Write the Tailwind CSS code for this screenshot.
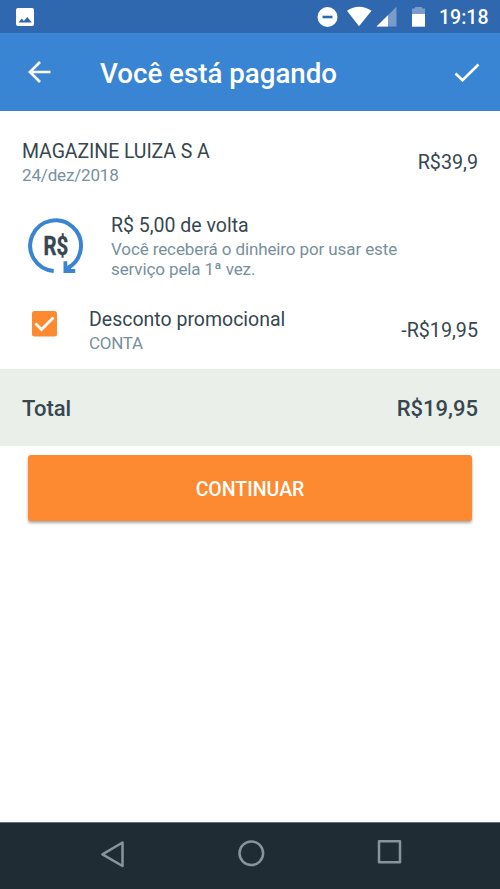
<!DOCTYPE html>
<html lang="pt-BR">
<head>
<meta charset="utf-8">
<title>Você está pagando</title>
<script src="https://cdn.jsdelivr.net/npm/@tailwindcss/browser@4"></script>
</head>
<body class="bg-white">
<div class="w-[500px] h-[889px] flex flex-col overflow-hidden font-[Roboto,sans-serif] text-[#37474f] whitespace-nowrap">
  <div class="h-[33px] shrink-0 bg-[#3068b0] flex items-center pl-4 pr-[11px] text-white">
    <svg class="w-[18px] h-[18px] mt-[1px]" viewBox="0 0 18 18"><rect width="18" height="18" rx="2" fill="#fff"/><path d="M2.500 14.500 5.800 10.500l2 2.500 3.500-4L15.800 14.500z" fill="#3068b0"/></svg>
    <svg class="ml-auto w-[122px] h-[33px]" viewBox="0 0 122 33">
      <circle cx="10.500" cy="17" r="10" fill="#fff"/><path d="M5.500 15.700h10v2.600h-10z" fill="#3068b0"/>
      <path d="M30 10.800Q42 2.800 54.500 10.800L42 26.200z" fill="#fff"/>
      <path d="M79.500 6.800V26.500H59.500z" fill="#fff" opacity=".35"/><path d="M71 15.200V26.500H59.500z" fill="#fff"/>
      <path d="M95 8.500h3V7h7v1.500h3V14H95z" fill="#fff" opacity=".35"/><path d="M95 14h13v12.700H95z" fill="#fff"/>
    </svg>
    <span class="w-[50px] text-[19.500px] leading-[33px] font-medium pt-[2px]">19:18</span>
  </div>
  <div class="h-[78px] shrink-0 bg-[#3985d3] flex items-center pl-[28px] pr-[20px] text-white">
    <svg class="w-[23px] h-[22px]" viewBox="0 0 23 22" fill="none" stroke="#fff" stroke-width="2.700"><path d="M12 1 2 11l10 10M2 11h20.500"/></svg>
    <h1 class="ml-[49px] text-[27.700px] leading-[32px] font-medium pt-[4px]">Você está pagando</h1>
    <svg class="ml-auto w-[26px] h-[20px] mt-[1px]" viewBox="0 0 26 20" fill="none" stroke="#fff" stroke-width="2.600"><path d="M1.500 10.500 8.500 17.200 24.500 1.500"/></svg>
  </div>
  <div class="h-[95px] shrink-0 flex justify-between px-[22px] pt-[29px]">
    <div>
      <div class="text-[19.500px] leading-[24px] tracking-[-0.080px]">MAGAZINE LUIZA S A</div>
      <div class="mt-[-1px] text-[17px] leading-[24px] tracking-[-0.160px] text-[#78909c]">24/dez/2018</div>
    </div>
    <div class="text-[19.700px] leading-[24px] pt-[11px]">R$39,9</div>
  </div>
  <div class="h-[94px] shrink-0 flex pl-[27px] pt-[8px]">
    <svg class="w-[58px] h-[60px]" viewBox="27 214 58 60"><g transform="translate(.7 .7)"><path d="M53 270.300A25.400 25.400 0 1 1 67 267.300" fill="none" stroke="#3985d3" stroke-width="4"/><path d="M64.700 260.500v9.800h9.800M64.700 270.300 70 265.500" fill="none" stroke="#3985d3" stroke-width="3.800"/></g><text x="43.500" y="255.200" textLength="24.800" lengthAdjust="spacingAndGlyphs" font-family="Roboto" font-weight="700" font-size="25.500" fill="#37474f" stroke="#37474f" stroke-width=".4">R$</text></svg>
    <div class="ml-[26px]">
      <div class="text-[19.500px] leading-[24px]">R$ 5,00 de volta</div>
      <div class="mt-[2px] text-[17px] leading-[19.500px] tracking-[-0.110px] text-[#78909c]">Você receberá o dinheiro por usar este<br>serviço pela 1ª vez.</div>
    </div>
  </div>
  <div class="h-[69px] shrink-0 flex pl-[32px] pr-[22px] pt-[8px]">
    <svg class="w-[25px] h-[26px] mt-[3px]" viewBox="0 0 25 26"><rect width="25" height="25.500" rx="2.500" fill="#fd8930"/><path d="m3.500 12.500 6 6L21.500 6.500" fill="none" stroke="#fff" stroke-width="2.800"/></svg>
    <div class="ml-[32px]">
      <div class="text-[19.500px] leading-[24px]">Desconto promocional</div>
      <div class="mt-[-1px] text-[17px] leading-[25px] tracking-[-0.300px] text-[#78909c]">CONTA</div>
    </div>
    <div class="ml-auto text-[19.700px] leading-[24px] pt-[11px]">-R$19,95</div>
  </div>
  <div class="h-[77px] shrink-0 bg-[#eaefe9] flex items-center justify-between px-[22px] pt-[2px] text-[22px] font-medium"><span>Total</span><span>R$19,95</span></div>
  <button class="mx-[28px] mt-[9px] h-[66px] shrink-0 rounded-[3px] bg-[#fd8930] text-white text-[19.500px] font-medium pt-[3px] shadow-[0_2px_3px_rgba(0,0,0,0.350)]">CONTINUAR</button>
  <div class="mt-auto h-[67px] shrink-0 bg-[#202c33] border-t border-[#667078]">
    <svg class="w-[500px] h-[66px]" viewBox="0 823 500 66" fill="none" stroke="#88949a" stroke-width="2.500" stroke-linejoin="round"><path d="M102.500 854.300 122.500 842.500V866z"/><circle cx="251.300" cy="853.200" r="11.800"/><path d="M379 841.300h21v21h-21z"/></svg>
  </div>
</div>
</body>
</html>
